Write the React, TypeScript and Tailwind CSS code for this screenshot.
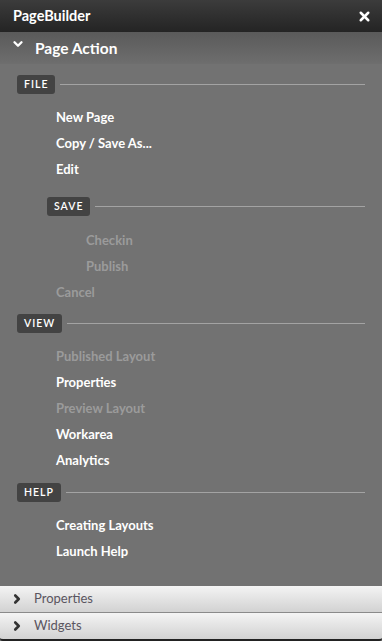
import { X, ChevronDown, ChevronRight } from "lucide-react";

type Item = { label: string; disabled?: boolean; indent?: boolean };

const Badge = ({ label, indent }: { label: string; indent?: boolean }) => (
  <div className={`flex items-center h-[19px] ${indent ? "pl-[47px]" : "pl-[17px]"} pr-[17px]`}>
    <span className="bg-[#434343] rounded-[3px] h-[19px] px-[7px] flex items-center text-white text-[10.5px] tracking-[1px] font-semibold">
      {label}
    </span>
    <div className="flex-1 h-px bg-[#a3a3a3] ml-[5px]" />
  </div>
);

const Link = ({ label, disabled, indent }: Item) => (
  <div
    className={`h-[26px] flex items-center pt-[1px] text-[13px] font-bold ${indent ? "pl-[86px]" : "pl-[56px]"} ${
      disabled ? "text-[#9b9b9b]" : "text-white"
    }`}
  >
    {label}
  </div>
);

export default function App() {
  return (
    <div className="w-[382px] h-[641px] flex flex-col bg-[#727272] overflow-hidden" style={{ fontFamily: "Lato, 'Open Sans', sans-serif" }}>
      <div className="h-[32px] flex items-center justify-between px-[13px] bg-gradient-to-b from-[#3c3c3c] to-[#242424]">
        <span className="text-white font-bold text-[14.5px]">PageBuilder</span>
        <X size={15} strokeWidth={4} className="text-white mr-[-3px]" />
      </div>
      <div className="h-[32px] flex items-center pt-[2px] bg-gradient-to-b from-[#5a5a5a] to-[#6e6e6e]">
        <ChevronDown size={14} strokeWidth={4} className="text-white ml-[11px] mt-[-10px]" />
        <span className="text-white font-bold text-[15.5px] ml-[10px]">Page Action</span>
      </div>
      <div className="flex-1 flex flex-col pt-[11px]">
        <Badge label="FILE" />
        <div className="pt-[10px]">
          <Link label="New Page" />
          <Link label="Copy / Save As..." />
          <Link label="Edit" />
        </div>
        <div className="pt-[15px]">
          <Badge label="SAVE" indent />
        </div>
        <div className="pt-[11px]">
          <Link label="Checkin" disabled indent />
          <Link label="Publish" disabled indent />
          <Link label="Cancel" disabled />
        </div>
        <div className="pt-[9px]">
          <Badge label="VIEW" />
        </div>
        <div className="pt-[10px]">
          <Link label="Published Layout" disabled />
          <Link label="Properties" />
          <Link label="Preview Layout" disabled />
          <Link label="Workarea" />
          <Link label="Analytics" />
        </div>
        <div className="pt-[10px]">
          <Badge label="HELP" />
        </div>
        <div className="pt-[10px]">
          <Link label="Creating Layouts" />
          <Link label="Launch Help" />
        </div>
      </div>
      <div className="h-[27px] flex items-center bg-gradient-to-b from-[#f4f4f4] to-[#d2d2d2] border-b border-[#8a8a8a]">
        <ChevronRight size={14} strokeWidth={4.5} className="text-[#333] ml-[10px]" />
        <span className="text-[#5a5560] text-[13px] ml-[10px]">Properties</span>
      </div>
      <div className="h-[28px] flex items-center bg-gradient-to-b from-[#f4f4f4] to-[#d2d2d2] border-b-2 border-[#222] rounded-b-[3px]">
        <ChevronRight size={14} strokeWidth={4.5} className="text-[#333] ml-[10px]" />
        <span className="text-[#5a5560] text-[13px] ml-[10px]">Widgets</span>
      </div>
    </div>
  );
}
